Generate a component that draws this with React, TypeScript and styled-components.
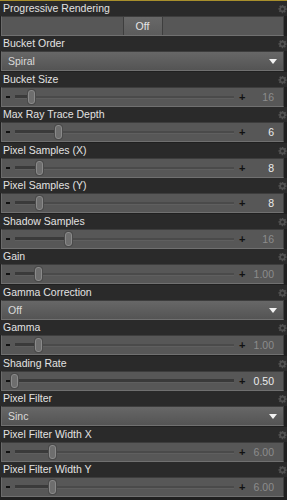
import React from "react";
import styled, { createGlobalStyle } from "styled-components";

const GlobalStyle = createGlobalStyle`
  html, body {
    margin: 0;
    padding: 0;
    background: #232323;
    overflow: hidden;
  }
  body {
    font-family: "Liberation Sans", Arial, sans-serif;
  }
`;

type Prop =
  | { kind: "toggle"; label: string; value: string }
  | { kind: "select"; label: string; value: string }
  | { kind: "slider"; label: string; value: string; knob: number; bright?: boolean };

const props: Prop[] = [
  { kind: "toggle", label: "Progressive Rendering", value: "Off" },
  { kind: "select", label: "Bucket Order", value: "Spiral" },
  { kind: "slider", label: "Bucket Size", value: "16", knob: 30 },
  { kind: "slider", label: "Max Ray Trace Depth", value: "6", knob: 57, bright: true },
  { kind: "slider", label: "Pixel Samples (X)", value: "8", knob: 38, bright: true },
  { kind: "slider", label: "Pixel Samples (Y)", value: "8", knob: 38, bright: true },
  { kind: "slider", label: "Shadow Samples", value: "16", knob: 67 },
  { kind: "slider", label: "Gain", value: "1.00", knob: 37 },
  { kind: "select", label: "Gamma Correction", value: "Off" },
  { kind: "slider", label: "Gamma", value: "1.00", knob: 37 },
  { kind: "slider", label: "Shading Rate", value: "0.50", knob: 13, bright: true },
  { kind: "select", label: "Pixel Filter", value: "Sinc" },
  { kind: "slider", label: "Pixel Filter Width X", value: "6.00", knob: 51 },
  { kind: "slider", label: "Pixel Filter Width Y", value: "6.00", knob: 51 },
];

const Gear = () => (
  <svg width="12" height="12" viewBox="0 0 24 24">
    <path
      fill="#505050"
      fillRule="evenodd"
      d="M10 1h4l.6 3.1 1.9.8 2.6-1.8 2.8 2.8-1.8 2.6.8 1.9L23 10v4l-3.1.6-.8 1.9 1.8 2.6-2.8 2.8-2.6-1.8-1.9.8L14 23h-4l-.6-3.1-1.9-.8-2.6 1.8-2.8-2.8 1.8-2.6-.8-1.9L1 14v-4l3.1-.6.8-1.9-1.8-2.6 2.8-2.8 2.6 1.8 1.9-.8zM12 8a4 4 0 1 0 0 8 4 4 0 0 0 0-8z"
    />
  </svg>
);

export default function App() {
  return (
    <>
      <GlobalStyle />
      <Panel>
        {props.map((p, i) => (
          <Block key={p.label} $gap={i % 2 === 0 ? 0 : 1}>
            <Header>
              <Label>{p.label}</Label>
              <GearSlot>
                <Gear />
              </GearSlot>
            </Header>
            {p.kind === "toggle" && (
              <ToggleRow>
                <ToggleSide />
                <ToggleButton>{p.value}</ToggleButton>
                <ToggleSide />
              </ToggleRow>
            )}
            {p.kind === "select" && (
              <SelectRow>
                <SelectText>{p.value}</SelectText>
                <Arrow />
              </SelectRow>
            )}
            {p.kind === "slider" && (
              <SliderRow>
                <Minus />
                <Track>
                  <Filled style={{ width: p.knob - 14 }} />
                  <Knob style={{ left: p.knob - 17 }} />
                </Track>
                <Plus>+</Plus>
                <Value $bright={!!p.bright}>{p.value}</Value>
              </SliderRow>
            )}
          </Block>
        ))}
      </Panel>
    </>
  );
}

const Panel = styled.div`
  width: 287px;
  height: 500px;
  overflow: hidden;
  background: #202020;
  border-top: 1px solid #a88f2c;
  box-sizing: border-box;
  display: flex;
  flex-direction: column;
`;

const Block = styled.div<{ $gap: number }>`
  display: flex;
  flex-direction: column;
  flex-shrink: 0;
  margin-bottom: ${(p) => p.$gap}px;
`;

const Header = styled.div`
  height: 15px;
  display: flex;
  align-items: center;
  justify-content: space-between;
  background: #2a2a2a;
  padding-left: 3px;
`;

const Label = styled.span`
  color: #e2e2e2;
  font-size: 10.5px;
  line-height: 15px;
  white-space: nowrap;
`;

const GearSlot = styled.div`
  width: 9px;
  height: 15px;
  overflow: hidden;
  display: flex;
  align-items: center;
  justify-content: flex-start;
`;

const ControlBase = styled.div`
  height: 20px;
  margin: 0 3px 0 1px;
  box-sizing: border-box;
  border-top: 1px solid #3d3d3d;
  border-left: 1px solid #6a6a6a;
  border-right: 1px solid #3f3f3f;
  border-bottom: 1px solid #707070;
  display: flex;
  align-items: center;
`;

const ToggleRow = styled(ControlBase)`
  background: #575757;
`;

const ToggleSide = styled.div`
  flex: 1;
  height: 100%;
`;

const ToggleButton = styled.div`
  width: 40px;
  height: 100%;
  box-sizing: border-box;
  border-left: 1px solid #3e3e3e;
  border-right: 1px solid #3e3e3e;
  background: linear-gradient(#686868, #5c5c5c);
  color: #e6e6e6;
  font-size: 10.5px;
  display: flex;
  align-items: center;
  justify-content: center;
`;

const SelectRow = styled(ControlBase)`
  background: linear-gradient(#676767, #545454);
  justify-content: space-between;
  padding: 0 6px 0 6px;
`;

const SelectText = styled.span`
  color: #dadada;
  font-size: 10.5px;
`;

const Arrow = styled.span`
  width: 0;
  height: 0;
  border-left: 4px solid transparent;
  border-right: 4px solid transparent;
  border-top: 5px solid #f2f2f2;
`;

const SliderRow = styled(ControlBase)`
  background: #575757;
  padding: 0 9px 0 4px;
`;

const Minus = styled.span`
  width: 4px;
  height: 2px;
  background: #111;
  margin-right: 5px;
`;

const Track = styled.div`
  position: relative;
  flex: 1;
  height: 2px;
  background: #4a4a4a;
  border-bottom: 1px solid #5f5f5f;
`;

const Filled = styled.div`
  height: 3px;
  margin-top: -1px;
  background: #3a3a3a;
`;

const Knob = styled.div`
  position: absolute;
  top: -6px;
  width: 5px;
  height: 12px;
  border-radius: 3px;
  background: #6e6e6e;
  border: 1px solid #8a8a8a;
  box-shadow: 0 0 0 1px #4a4a4a;
`;

const Plus = styled.span`
  color: #111;
  font-size: 11px;
  font-weight: bold;
  margin-left: 5px;
  width: 8px;
`;

const Value = styled.span<{ $bright: boolean }>`
  width: 24px;
  text-align: right;
  margin-left: 3px;
  font-size: 10.5px;
  color: ${(p) => (p.$bright ? "#ececec" : "#8c8c8c")};
`;
